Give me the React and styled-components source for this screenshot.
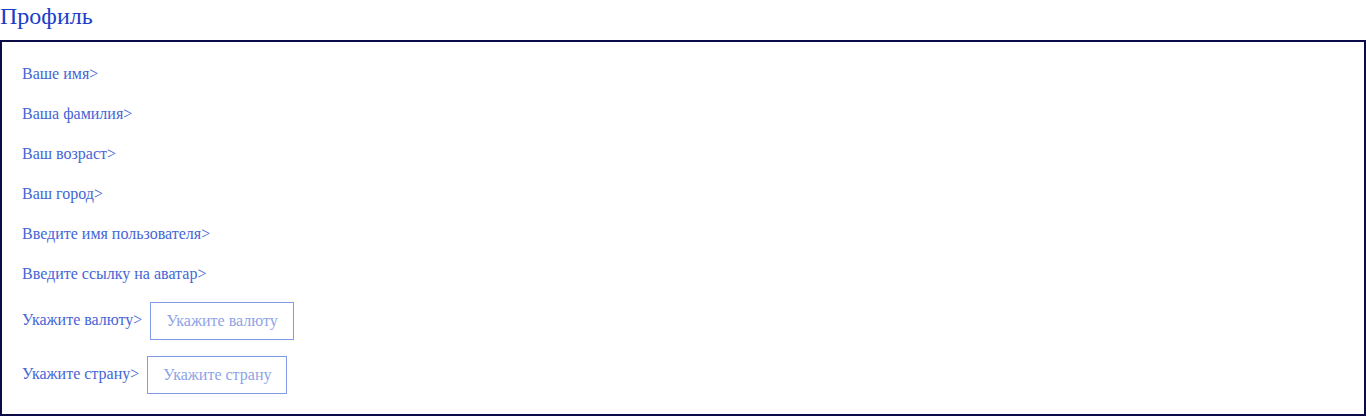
import React from "react";
import styled, { createGlobalStyle } from "styled-components";

const Global = createGlobalStyle`
  html, body { margin: 0; padding: 0; background: #fff; }
  body { font-family: "Liberation Serif", "Times New Roman", serif; }
`;

const Title = styled.h2`
  margin: 0 0 8px;
  font-size: 24px;
  line-height: 32px;
  font-weight: 400;
  color: #1b3ec9;
`;

const Card = styled.div`
  border: 2px solid #0b0b48;
  padding: 20px;
  display: flex;
  flex-direction: column;
  gap: 16px;
`;

const Row = styled.div`
  display: flex;
  align-items: center;
  gap: 8px;
  min-height: 24px;
`;

const Label = styled.span`
  font-size: 16px;
  line-height: 18px;
  padding-bottom: ${(p) => (p.$raised ? "2px" : "0")};
  color: #4465d6;
`;

const Picker = styled.div`
  border: 1px solid #819be9;
  padding: 9px 15px;
  font-size: 16px;
  line-height: 18px;
  color: #8ea3e6;
`;

const fields = [
  { label: "Ваше имя>" },
  { label: "Ваша фамилия>" },
  { label: "Ваш возраст>" },
  { label: "Ваш город>" },
  { label: "Введите имя пользователя>" },
  { label: "Введите ссылку на аватар>" },
  { label: "Укажите валюту>", picker: "Укажите валюту" },
  { label: "Укажите страну>", picker: "Укажите страну" },
];

export default function App() {
  return (
    <>
      <Global />
      <Title>Профиль</Title>
      <Card>
        {fields.map((f) => (
          <Row key={f.label}>
            <Label $raised={!!f.picker}>{f.label}</Label>
            {f.picker && <Picker>{f.picker}</Picker>}
          </Row>
        ))}
      </Card>
    </>
  );
}
